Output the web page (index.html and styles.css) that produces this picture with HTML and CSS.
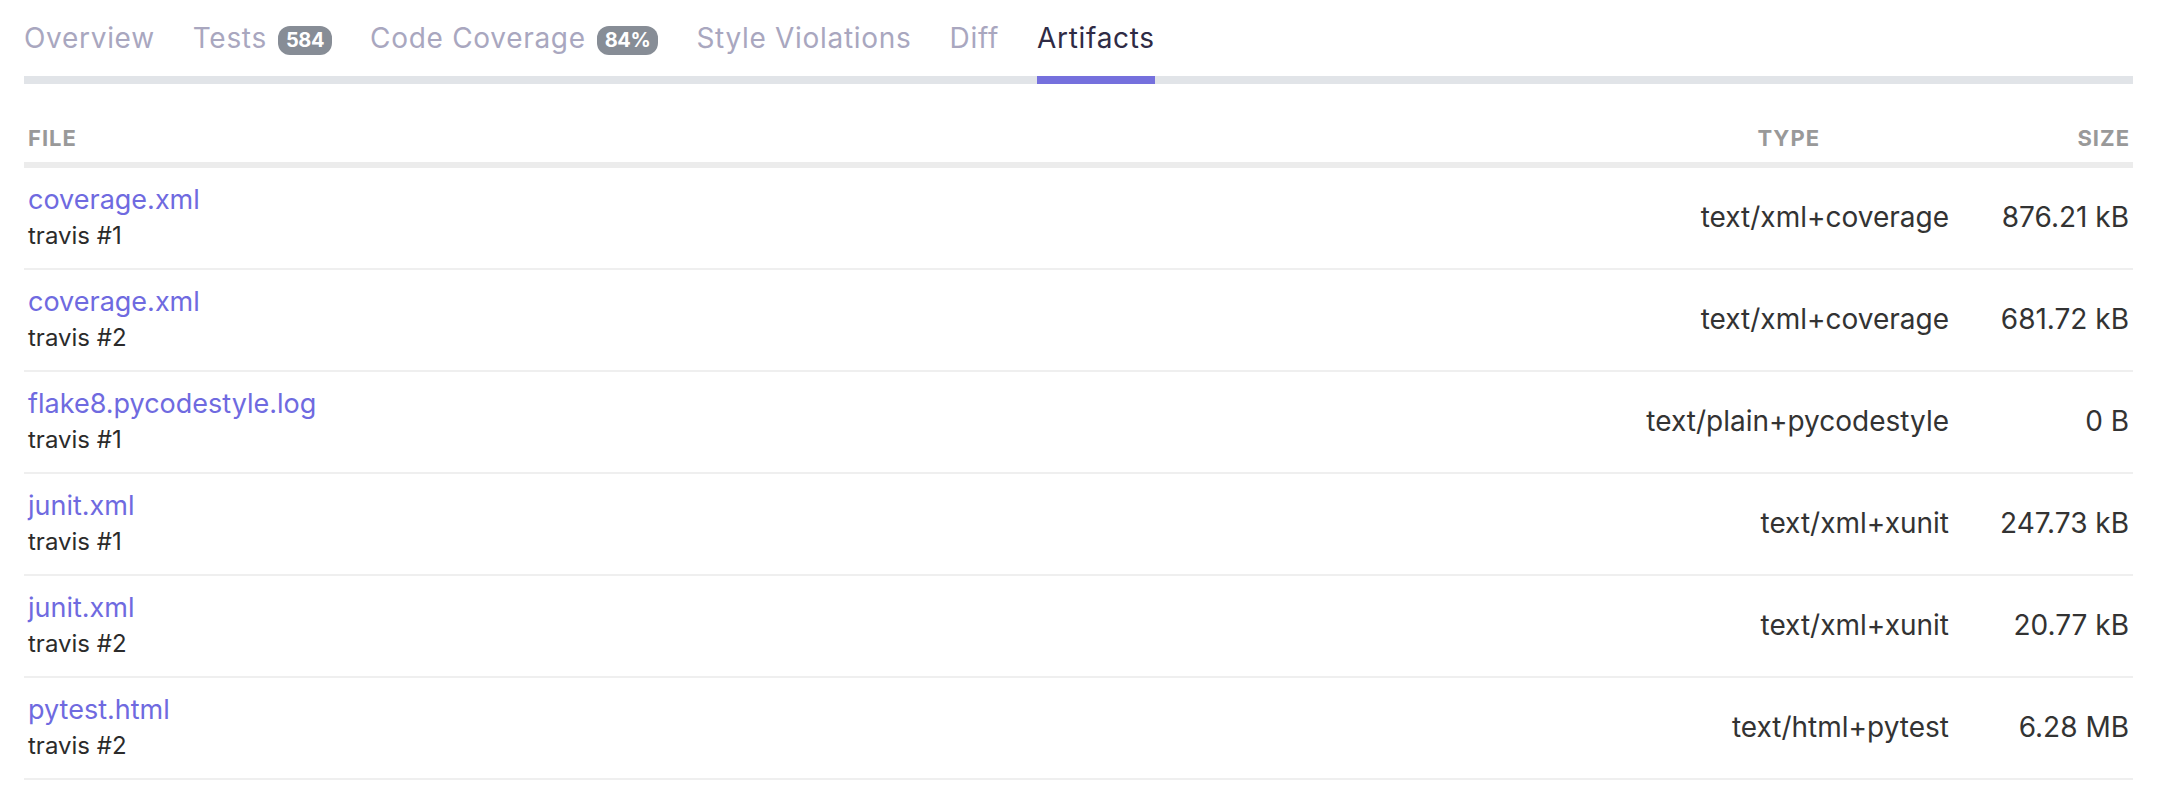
FILE: index.html
```html
<!DOCTYPE html>
<html lang="en">
<head>
<meta charset="utf-8">
<title>Artifacts</title>
<link rel="stylesheet" href="styles.css">
</head>
<body>
<div class="page">
  <nav class="tabs">
    <a class="tab">Overview</a>
    <a class="tab">Tests<span class="badge">584</span></a>
    <a class="tab">Code Coverage<span class="badge">84%</span></a>
    <a class="tab">Style Violations</a>
    <a class="tab">Diff</a>
    <a class="tab active">Artifacts</a>
  </nav>
  <div class="table">
    <div class="thead">
      <div class="th">File</div>
      <div class="th th-type">Type</div>
      <div class="th th-size">Size</div>
    </div>
    <div class="trow">
      <div class="cell-file"><a class="file-link">coverage.xml</a><div class="job">travis #1</div></div>
      <div class="cell-type">text/xml+coverage</div>
      <div class="cell-size">876.21 kB</div>
    </div>
    <div class="trow">
      <div class="cell-file"><a class="file-link">coverage.xml</a><div class="job">travis #2</div></div>
      <div class="cell-type">text/xml+coverage</div>
      <div class="cell-size">681.72 kB</div>
    </div>
    <div class="trow">
      <div class="cell-file"><a class="file-link">flake8.pycodestyle.log</a><div class="job">travis #1</div></div>
      <div class="cell-type">text/plain+pycodestyle</div>
      <div class="cell-size">0 B</div>
    </div>
    <div class="trow">
      <div class="cell-file"><a class="file-link">junit.xml</a><div class="job">travis #1</div></div>
      <div class="cell-type">text/xml+xunit</div>
      <div class="cell-size">247.73 kB</div>
    </div>
    <div class="trow">
      <div class="cell-file"><a class="file-link">junit.xml</a><div class="job">travis #2</div></div>
      <div class="cell-type">text/xml+xunit</div>
      <div class="cell-size">20.77 kB</div>
    </div>
    <div class="trow">
      <div class="cell-file"><a class="file-link">pytest.html</a><div class="job">travis #2</div></div>
      <div class="cell-type">text/html+pytest</div>
      <div class="cell-size">6.28 MB</div>
    </div>
  </div>
</div>
</body>
</html>
```

FILE: styles.css
```css
html, body {
  margin: 0;
  padding: 0;
  background: #ffffff;
}

body {
  font-family: Inter, "Noto Sans", "Liberation Sans", sans-serif;
  color: #2b2b2b;
}

.page {
  padding-left: 24px;
  width: 2109px;
}

.tabs {
  display: flex;
  gap: 38px;
  padding-top: 18px;
  border-bottom: 8px solid #e1e4e8;
}

.tab {
  display: flex;
  align-items: center;
  font-size: 28px;
  line-height: 40px;
  letter-spacing: 0.7px;
  color: #a9a7bf;
  padding-bottom: 18px;
  border-bottom: 8px solid transparent;
  margin-bottom: -8px;
  cursor: pointer;
}

.tab.active {
  color: #2f2b45;
  border-bottom-color: #7570dd;
}

.badge {
  display: inline-flex;
  align-items: center;
  justify-content: center;
  height: 29px;
  padding: 0 8px;
  margin-left: 11px;
  margin-top: 4px;
  border-radius: 12px;
  background: #878d96;
  color: #ffffff;
  font-size: 20px;
  font-weight: 700;
  letter-spacing: -0.4px;
  line-height: 1;
}

.thead {
  display: grid;
  grid-template-columns: 1fr auto 180px;
  padding: 41px 0 11px;
  border-bottom: 6px solid #ececec;
}

.th {
  font-size: 22px;
  line-height: 26px;
  font-weight: 700;
  letter-spacing: 1px;
  text-transform: uppercase;
  color: #999999;
  padding-left: 4px;
}

.th-type {
  text-align: right;
  padding-right: 133px;
}

.th-size {
  text-align: right;
  padding-right: 3px;
}

.trow {
  display: grid;
  grid-template-columns: 1fr auto 180px;
  align-items: center;
  padding: 13px 0 16px;
  border-bottom: 2px solid #efefef;
}

.cell-file {
  padding-left: 4px;
}

.file-link {
  display: block;
  font-size: 27px;
  line-height: 38px;
  color: #6f6ae0;
  cursor: pointer;
}

.job {
  font-size: 24px;
  line-height: 33px;
  color: #2b2b2b;
}

.cell-type,
.cell-size {
  font-size: 28px;
  line-height: 34px;
  color: #333333;
  text-align: right;
  padding-right: 4px;
}
```
